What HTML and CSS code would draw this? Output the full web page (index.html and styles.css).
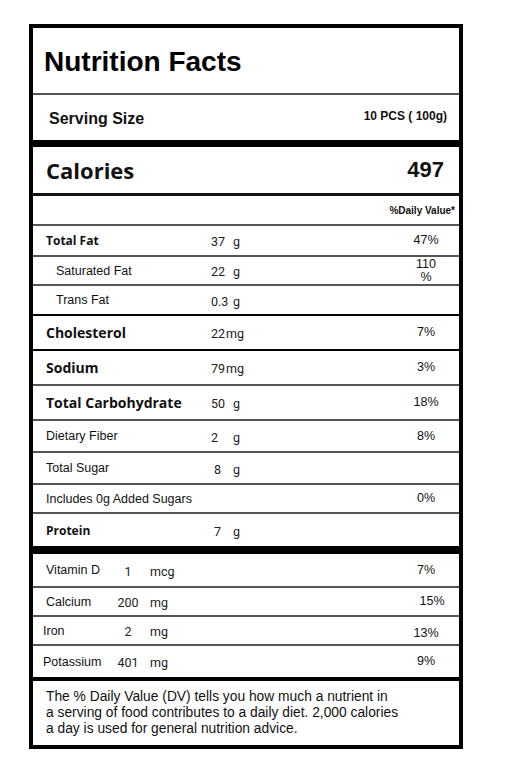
FILE: index.html
```html
<!DOCTYPE html>
<html lang="en">
<head>
    <meta charset="UTF-8">
    <meta name="viewport" content="width=device-width, initial-scale=1.0">
    <title>Nutrition Facts</title>
    <link rel="stylesheet" href="styles.css">
</head>
<body>

    <div class="label-box">
        <div class="row title">
            <h1>Nutrition Facts</h1>
        </div>
        <div class="row serving">
            <span class="serving-name">Serving Size</span>
            <span class="serving-value">10 PCS ( 100g)</span>
        </div>
        <div class="row calories">
            <span class="cal-name">Calories</span>
            <span class="cal-value">497</span>
        </div>
        <div class="row dv">
            <span class="dv-head">%Daily Value*</span>
        </div>

        <div class="row nutrient h31">
            <span class="name bold">Total Fat</span>
            <span class="amount"><span class="num">37</span>g</span>
            <span class="pct">47%</span>
        </div>
        <div class="row nutrient sub h29">
            <span class="name">Saturated Fat</span>
            <span class="amount"><span class="num">22</span>g</span>
            <span class="pct">110 %</span>
        </div>
        <div class="row nutrient sub h30 dark">
            <span class="name">Trans Fat</span>
            <span class="amount"><span class="num">0.3</span>g</span>
            <span class="pct"></span>
        </div>
        <div class="row nutrient h35 dark">
            <span class="name big">Cholesterol</span>
            <span class="amount">22<span class="unit">mg</span></span>
            <span class="pct">7%</span>
        </div>
        <div class="row nutrient h35">
            <span class="name big">Sodium</span>
            <span class="amount">79<span class="unit">mg</span></span>
            <span class="pct">3%</span>
        </div>
        <div class="row nutrient h35">
            <span class="name big">Total Carbohydrate</span>
            <span class="amount"><span class="num">50</span>g</span>
            <span class="pct">18%</span>
        </div>
        <div class="row nutrient h32">
            <span class="name">Dietary Fiber</span>
            <span class="amount"><span class="num">2</span>g</span>
            <span class="pct">8%</span>
        </div>
        <div class="row nutrient h32">
            <span class="name">Total Sugar</span>
            <span class="amount"><span class="num pad">8</span>g</span>
            <span class="pct"></span>
        </div>
        <div class="row nutrient h29">
            <span class="name wide">Includes 0g Added Sugars</span>
            <span class="pct">0%</span>
        </div>
        <div class="row nutrient protein">
            <span class="name bold">Protein</span>
            <span class="amount"><span class="num pad">7</span>g</span>
            <span class="pct"></span>
        </div>

        <div class="row vitamin h34">
            <span class="vname">Vitamin D</span>
            <span class="vnum">1</span>
            <span class="vunit">mcg</span>
            <span class="pct">7%</span>
        </div>
        <div class="row vitamin h29">
            <span class="vname">Calcium</span>
            <span class="vnum">200</span>
            <span class="vunit">mg</span>
            <span class="pct shift">15%</span>
        </div>
        <div class="row vitamin left h29">
            <span class="vname">Iron</span>
            <span class="vnum">2</span>
            <span class="vunit">mg</span>
            <span class="pct low">13%</span>
        </div>
        <div class="row vitamin left potassium">
            <span class="vname">Potassium</span>
            <span class="vnum">401</span>
            <span class="vunit">mg</span>
            <span class="pct">9%</span>
        </div>

        <p class="footnote">
            The % Daily Value (DV) tells you how much a nutrient in<br>
            a serving of food contributes to a daily diet. 2,000 calories<br>
            a day is used for general nutrition advice.
        </p>
    </div>

</body>
</html>
```

FILE: styles.css
```css
* {
    box-sizing: border-box;
}
body {
    margin: 0;
    padding: 24px 0 0 29px;
    background: #ffffff;
    font-family: "Liberation Sans", Arial, sans-serif;
    color: #111;
}
.label-box {
    width: 434px;
    border: 4px solid #000;
    background: #fff;
}
.row {
    display: flex;
    align-items: center;
    border-bottom: 2px solid #555;
}
.title {
    height: 67px;
    padding-left: 11px;
}
.title h1 {
    margin: 2px 0 0;
    font-size: 28px;
    font-weight: bold;
    color: #000;
}
.serving {
    height: 52px;
    padding: 0 12px 0 16px;
    justify-content: space-between;
    border-bottom: 7px solid #000;
}
.serving-name {
    font-size: 16px;
    font-weight: bold;
    margin-top: 2px;
}
.serving-value {
    font-size: 12px;
    font-weight: bold;
    margin-top: -3px;
}
.calories {
    height: 49px;
    padding: 0 15px 0 13px;
    justify-content: space-between;
    border-bottom: 3px solid #111;
}
.cal-name {
    font-family: "Open Sans", sans-serif;
    font-size: 22px;
    font-weight: 700;
}
.cal-value {
    font-size: 22px;
    font-weight: bold;
}
.dv {
    height: 30px;
    padding-right: 4px;
    justify-content: flex-end;
}
.dv-head {
    font-size: 10px;
    font-weight: bold;
}

.nutrient {
    padding: 0 19px 0 13px;
    font-size: 12.5px;
}
.name {
    width: 165px;
}
.sub .name {
    width: 155px;
    margin-left: 10px;
}
.name.wide {
    flex: 1;
}
.name.bold {
    font-family: "Open Sans", sans-serif;
    font-weight: 700;
    font-size: 12px;
}
.name.big {
    font-family: "Open Sans", sans-serif;
    font-weight: 700;
    font-size: 14px;
}
.amount {
    flex: 1;
    font-family: Roboto, sans-serif;
    font-size: 12.5px;
    color: #222;
    margin-top: 2px;
}
.num {
    display: inline-block;
    width: 22px;
}
.num.pad {
    padding-left: 3px;
}
.unit {
    margin-left: 1px;
}
.pct {
    width: 28px;
    text-align: center;
    font-size: 12.5px;
    line-height: 13px;
}
.dark {
    border-bottom-color: #000;
}
.protein {
    height: 40px;
    border-bottom: 8px solid #000;
}

.vitamin {
    padding: 0 19px 0 13px;
    font-size: 12.5px;
}
.vitamin.left {
    padding-left: 10px;
}
.vname {
    width: 67px;
}
.left .vname {
    width: 70px;
}
.vnum {
    width: 30px;
    text-align: center;
    font-family: Roboto, sans-serif;
    color: #222;
    margin-top: 2px;
}
.vunit {
    flex: 1;
    margin-left: 7px;
    font-family: Roboto, sans-serif;
    color: #222;
    margin-top: 2px;
}
.pct.shift {
    margin-right: -6px;
    margin-left: 6px;
}
.pct.low {
    margin-top: 5px;
}
.potassium {
    height: 35px;
    border-bottom: 4px solid #000;
}

.h29 { height: 29px; }
.h30 { height: 30px; }
.h31 { height: 31px; }
.h32 { height: 32px; }
.h34 { height: 34px; }
.h35 { height: 35px; }

.footnote {
    margin: 0;
    height: 64px;
    padding: 8px 0 0 13px;
    font-size: 13.8px;
    line-height: 16px;
    color: #111;
}
```
